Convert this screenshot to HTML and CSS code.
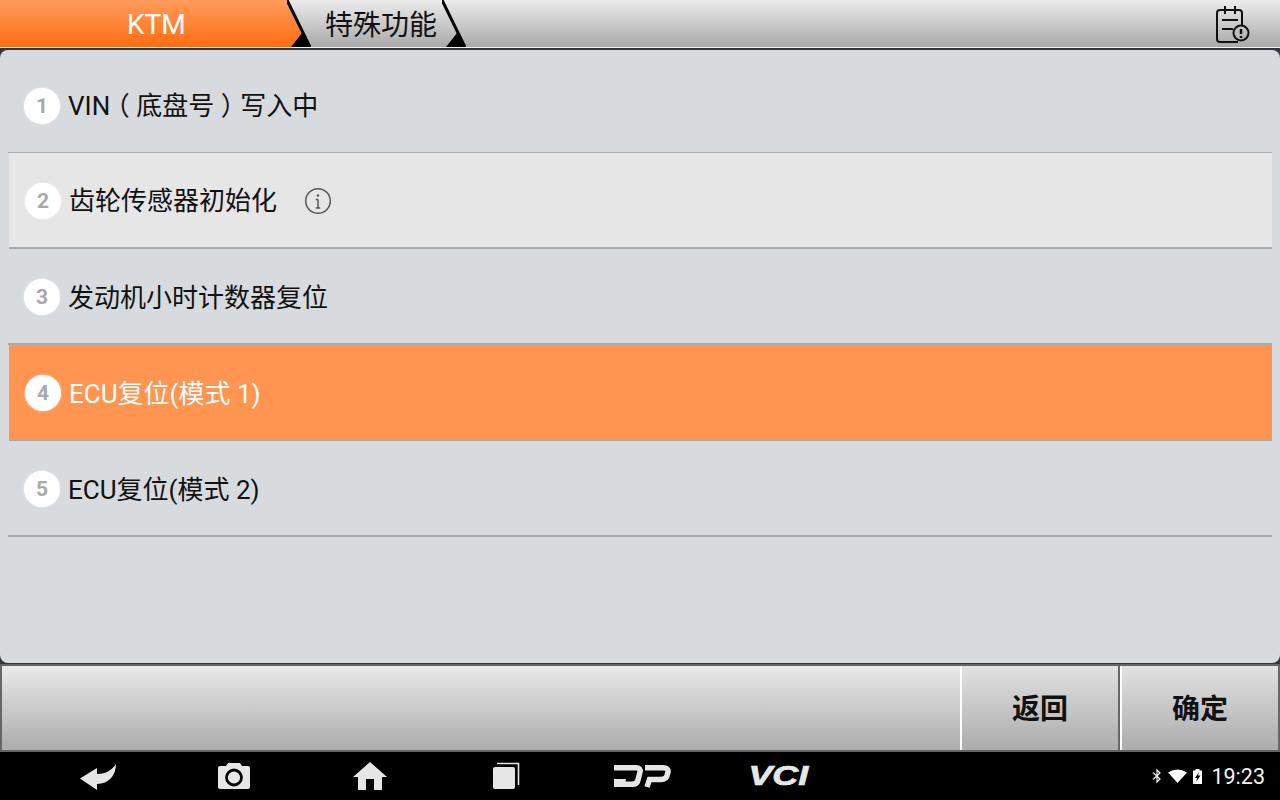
FILE: index.html
```html
<!DOCTYPE html>
<html lang="zh-CN">
<head>
<meta charset="utf-8">
<title>KTM 特殊功能</title>
<link rel="stylesheet" href="styles.css">
</head>
<body>
<div class="screen">
  <header class="topbar">
    <div class="tab tab-active"><span class="tab-label">KTM</span></div>
    <svg class="chevron chevron-1" viewBox="0 0 24 47" width="24" height="47"><path class="chev-fill" d="M4 47 15 33 23 47Z"/><path class="chev-line" d="M0 0 23 47"/></svg>
    <div class="tab tab-second"><span class="tab-label">特殊功能</span>
      <svg class="chevron chevron-2" viewBox="0 0 24 47" width="24" height="47"><path class="chev-fill" d="M4 47 15 33 23 47Z"/><path class="chev-line" d="M0 0 23 47"/></svg>
    </div>
    <svg class="report-icon" viewBox="0 0 36 40" width="36" height="40">
      <path class="ic-line" d="M23 37H5a3 3 0 0 1-3-3V8a3 3 0 0 1 3-3h19a3 3 0 0 1 3 3v12"/>
      <path class="ic-line" d="M10 1v8M20 1v8M7 15h16M7 24h11"/>
      <circle class="ic-line" cx="26" cy="28" r="7.5"/>
      <path class="ic-bold" d="M26 24v5M26 31v2"/>
    </svg>
  </header>

  <main class="panel">
    <ul class="menu">
      <li class="row row-first"><span class="num">1</span><span class="label">VIN<span class="fw">（</span>底盘号<span class="fw">）</span>写入中</span></li>
      <li class="row row-pressed thick"><span class="num">2</span><span class="label">齿轮传感器初始化</span>
        <svg class="info" viewBox="0 0 28 28" width="28" height="28"><circle cx="14" cy="14" r="12.3"/><path d="M14 12.5v8.500M11.800 12.500H14M11.800 21h4.400"/><circle class="dot" cx="14" cy="8.500" r="1.200"/></svg>
      </li>
      <li class="row thick"><span class="num">3</span><span class="label">发动机小时计数器复位</span></li>
      <li class="row row-selected thick"><span class="num">4</span><span class="label">ECU复位(模式 1)</span></li>
      <li class="row thick"><span class="num">5</span><span class="label">ECU复位(模式 2)</span></li>
    </ul>
  </main>

  <section class="toolbar">
    <div class="tool-spacer"></div>
    <button class="tool-btn tool-back">返回</button>
    <button class="tool-btn tool-ok">确定</button>
  </section>

  <footer class="navbar">
    <div class="nav-item"><svg viewBox="0 0 38 30" width="38" height="30"><path class="nav-fill" d="M1 17.500 18 7v6c8 0 14-3 19-10 0 11-7 20-19 20v6Z"/></svg></div>
    <div class="nav-item"><svg viewBox="0 0 34 28" width="34" height="28"><path class="nav-fill" d="M3 4h6l2-3h12l2 3h6a2 2 0 0 1 2 2v19a2 2 0 0 1-2 2H3a2 2 0 0 1-2-2V6a2 2 0 0 1 2-2Z"/><circle class="lens" cx="17" cy="15.500" r="7.500"/></svg></div>
    <div class="nav-item"><svg viewBox="0 0 34 30" width="34" height="30"><path class="nav-fill" d="M17 1 34 16h-5v13h-8V18h-8v11H5V16H0Z"/></svg></div>
    <div class="nav-item"><svg viewBox="-1 0 30 28" width="30" height="28"><rect class="nav-fill" x="1" y="5" width="22" height="22" rx="2"/><path class="nav-stroke" d="M5 1.500H26.500V23"/></svg></div>
    <div class="nav-item"><svg viewBox="1 0 58 26" width="58" height="26"><path class="logo-stroke" d="M2 4.700H24Q29 4.700 28 9L26 17Q25 21.300 20 21.300H2"/><path class="logo-fill" d="M2 16H14L12 24H2Z"/><path class="logo-stroke" d="M33 4.700H51Q56.500 4.700 56 9L55.500 11Q54.500 16.500 49 16.500H37.500L35 24"/></svg></div>
    <div class="nav-item"><span class="vci">VCI</span></div>
    <div class="status">
      <svg class="st-bt" viewBox="0 0 10 16" width="10" height="16"><path class="st-stroke" d="M1 4.500 8 11 5 14V2l3 3-7 6.500"/></svg>
      <svg class="st-wifi" viewBox="0 0 19 14" width="19" height="14"><path class="nav-white" d="M0 3.500Q9.500-2.500 19 3.500L9.500 14Z"/></svg>
      <svg class="st-batt" viewBox="0 0 9 15" width="9" height="15"><path class="nav-white" fill-rule="evenodd" d="M2.500 0h4v1.500H9V15H0V1.500h2.500ZM6 3 2 9h2.300L3 13 7.500 6.500H5Z"/></svg>
      <span class="clock">19:23</span>
    </div>
  </footer>
</div>
</body>
</html>
```
FILE: styles.css
```css
* { box-sizing: border-box; }
html, body { margin: 0; padding: 0; }
body {
  width: 1280px;
  height: 800px;
  overflow: hidden;
  background: #33363f;
  font-family: Roboto, "Noto Sans CJK SC", sans-serif;
}
.screen { display: flex; flex-direction: column; width: 1280px; height: 800px; }

/* top bar */
.topbar {
  position: relative;
  display: flex;
  flex: none;
  height: 48px;
  background: linear-gradient(#ececec, #a9a9a9);
  border-bottom: 1px solid #f2f2f2;
}
.tab { display: flex; align-items: center; height: 47px; font-size: 28px; flex: none; }
.tab-active {
  width: 310px;
  padding-left: 127px;
  color: #fff;
  background: linear-gradient(#ff9c5c, #ff6d12);
  clip-path: polygon(0 0, 287px 0, 310px 47px, 0 47px);
}
.tab-active .tab-label { margin-top: 3px; }
.tab-second { position: relative; width: 155px; padding-left: 15px; color: #111; }
.tab-second .tab-label { margin-top: 5px; }
.tab-label { display: block; line-height: 40px; }
.chevron { position: absolute; top: 0; }
.chevron-1 { left: 287px; }
.chevron-2 { left: 132px; }
.chev-fill { fill: #000; }
.chev-line { fill: none; stroke: #000; stroke-width: 3; }
.report-icon { position: absolute; right: 29px; top: 5px; }
.ic-line { fill: none; stroke: #111; stroke-width: 2; }
.ic-bold { fill: none; stroke: #111; stroke-width: 2.5; }

/* main list */
.panel {
  flex: none;
  height: 613px;
  margin-top: 2px;
  padding: 7px 8px 0;
  background: #d7dbde;
  border-radius: 8px;
}
.menu { list-style: none; margin: 0; padding: 0; }
.row {
  display: flex;
  align-items: center;
  height: 96px;
  padding: 2px 0 0 16px;
  border-bottom: 1px solid #a9abad;
  color: #111;
  font-size: 26px;
}
.thick { border-bottom-width: 2px; }
.num {
  flex: none;
  width: 36px;
  height: 36px;
  margin-right: 8px;
  border-radius: 50%;
  background: #fff;
  box-shadow: 0 0 2px rgba(255,255,255,.8);
  color: #a9a9a9;
  font-size: 21px;
  font-weight: 700;
  line-height: 37px;
  text-align: center;
}
.label { padding-top: 2px; line-height: 40px; }
.row-first .label, .row-pressed .label { padding-top: 0; }
.fw { padding: 0 6.5px; font-feature-settings: "halt"; }
.row-pressed, .row-selected { margin-left: 1px; }
.row-pressed { background: #e6e6e6; }
.row-selected { background: #ff9550; color: #fff; }
.info { margin-left: 27px; }
.info circle { fill: none; stroke: #555; stroke-width: 1.5; }
.info path { fill: none; stroke: #555; stroke-width: 1.5; }
.info .dot { fill: #555; stroke: none; }

/* bottom tools */
.toolbar {
  display: flex;
  flex: none;
  height: 89px;
  padding: 2px 2px 2px;
  background: #666;
  border-top: 1px solid #33363f;
}
.tool-spacer { flex: 1; background: linear-gradient(#e9e9e9, #acacac); }
.tool-btn {
  flex: none;
  height: 84px;
  padding: 0 0 3px;
  border: 0;
  border-left: 2px solid #fff;
  background: linear-gradient(#e1e1e1, #acacac);
  color: #111;
  font: 700 28px Roboto, "Noto Sans CJK SC", sans-serif;
}
.tool-back { width: 160px; border-right: 2px solid #666; }
.tool-ok { width: 158px; }

/* android nav */
.navbar {
  display: flex;
  align-items: center;
  flex: none;
  height: 48px;
  padding-left: 30px;
  background: #000;
}
.nav-item { display: flex; justify-content: center; align-items: center; flex: none; width: 136px; height: 48px; }
.nav-fill { fill: #e6e6e6; }
.nav-white { fill: #fff; }
.nav-stroke { fill: none; stroke: #e6e6e6; stroke-width: 1.600; }
.lens { fill: #e6e6e6; stroke: #000; stroke-width: 2.800; }
.logo-stroke { fill: none; stroke: #e6e6e6; stroke-width: 5.500; }
.logo-fill { fill: #e6e6e6; }
.vci {
  color: #e6e6e6;
  font: italic 700 28px "Liberation Sans", sans-serif;
  transform: scaleX(1.28);
  -webkit-text-stroke: .7px #e6e6e6;
}
.status { display: flex; align-items: center; margin-left: auto; padding-right: 15px; }
.st-stroke { fill: none; stroke: #f2f2f2; stroke-width: 1.200; }
.st-bt { margin-right: 6px; }
.st-wifi { margin-right: 6px; }
.st-batt { margin-right: 9px; }
.clock { margin-top: 2px; color: #f2f2f2; font-size: 21.5px; line-height: 24px; }
```
